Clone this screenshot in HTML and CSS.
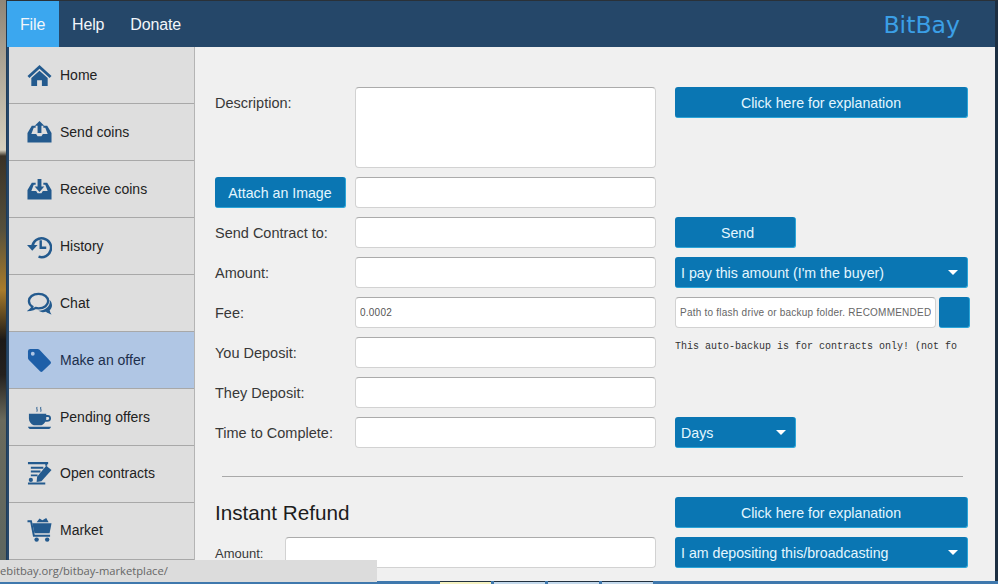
FILE: index.html
```html
<!DOCTYPE html>
<html lang="en">
<head>
    <meta charset="UTF-8">
    <title>BitBay</title>
    <link rel="stylesheet" href="styles.css">
</head>
<body>
    <div class="window">
        <div class="header">
            <div class="menu">
                <a class="menu-item active">File</a>
                <a class="menu-item">Help</a>
                <a class="menu-item">Donate</a>
            </div>
            <div class="brand">BitBay</div>
        </div>
        <div class="main">
            <div class="sidebar">
                <div class="side-item">
                    <svg class="side-icon" viewBox="0 0 26 26"><path d="M13 2 L0.5 13.5 L2.5 15.5 L13 6 L23.5 15.5 L25.5 13.5 Z"/><path d="M4.5 15.5 L13 8 L21.5 15.5 V24 H15.5 V18 H10.5 V24 H4.5 Z"/></svg>
                    <span>Home</span>
                </div>
                <div class="side-item">
                    <svg class="side-icon" viewBox="0 0 26 26"><path d="M5 6 H9 V8 H7 L4.500 14.500 H9.500 L11 17 H15 L16.500 14.500 H21.500 L19 8 H17 V6 H21 L25.500 13.500 V23.500 H0.500 V13.500 Z"/><path d="M13 1 L18 6 H15 V13.500 H11 V6 H8 Z"/></svg>
                    <span>Send coins</span>
                </div>
                <div class="side-item">
                    <svg class="side-icon" viewBox="0 0 26 26"><path d="M5 6 H9 V8 H7 L4.500 14.500 H9.500 L11 17 H15 L16.500 14.500 H21.500 L19 8 H17 V6 H21 L25.500 13.500 V23.500 H0.500 V13.500 Z"/><path d="M13 15.500 L8 10 H11 V2 H15 V10 H18 Z"/></svg>
                    <span>Receive coins</span>
                </div>
                <div class="side-item">
                    <svg class="side-icon" viewBox="0 0 26 26"><path d="M5.5 13 A9.8 9.8 0 1 1 12 23.5" fill="none" stroke="currentColor" stroke-width="2.6"/><path d="M0 11.5 H11 L5.5 17.5 Z"/><path d="M13 6.5 H15.5 V13 H20 V15.5 H13 Z"/></svg>
                    <span>History</span>
                </div>
                <div class="side-item">
                    <svg class="side-icon" viewBox="0 0 26 26"><path d="M12 3 C6 3 2 6.3 2 10.5 C2 13 3.4 15 5.6 16.3 C5.3 17.6 4.4 18.8 3.4 19.6 C5.6 19.4 7.6 18.6 9 17.6 C10 17.9 11 18 12 18 C18 18 22 14.700 22 10.500 C22 6.300 18 3 12 3 Z" fill="none" stroke="currentColor" stroke-width="2.4"/><path d="M23.500 9 C25 10.500 26 12.800 26 14.900 C26 17 25 18.800 23.600 20 C23.800 21.500 24.500 23 25.500 24.400 C23.400 24 21.300 23 19.700 21.700 C18.500 22 17.200 22.100 16 22 C14.300 21.800 12.800 21.300 11.500 20.400 C18 20.700 25 16.500 23.500 9 Z"/></svg>
                    <span>Chat</span>
                </div>
                <div class="side-item selected">
                    <svg class="side-icon" viewBox="0 0 26 26"><path fill-rule="evenodd" d="M3.500 1 H11 Q12.200 1 13 1.800 L24.500 14 Q25.500 15.200 24.500 16.300 L16 24.500 Q15 25.500 13.800 24.500 L2 12.500 Q1 11.500 1 10.500 V3.500 Q1 1 3.500 1 Z M6 4 A2 2 0 1 0 6 8 A2 2 0 1 0 6 4 Z"/></svg>
                    <span>Make an offer</span>
                </div>
                <div class="side-item">
                    <svg class="side-icon" viewBox="0 0 26 26"><path d="M2 9 H20 V10.500 H21.500 C24 10.500 25 12 25 14 C25 16 23.500 17.500 21 17.500 H19 C18 19.500 16.500 20.500 15 21 H7 C4 20 2 17 2 14 Z M20 12.500 V15.500 H21 C22.300 15.500 23 15 23 14 C23 13 22.300 12.500 21.500 12.500 Z"/><path d="M1 22.500 H25 C24.500 24 23.500 25 22 25 H4 C2.500 25 1.500 24 1 22.500 Z"/><path d="M10.500 2 C9.300 3.500 11.300 4.500 10.300 7 M14.500 2 C13.300 3.500 15.300 4.500 14.300 7" fill="none" stroke="currentColor" stroke-width="1"/></svg>
                    <span>Pending offers</span>
                </div>
                <div class="side-item raised">
                    <svg class="side-icon" viewBox="0 0 26 26"><path d="M1 2 H22 V4.500 H1 Z M4 7 H17 V9 H4 Z M4 11 H14 V13 H4 Z M4 15 H11 V17 H4 Z M1 23.500 H19 V25.500 H1 Z"/><path d="M4 18.500 A2.200 2.200 0 1 0 4 22.900 A2.200 2.200 0 1 0 4 18.500 Z"/><path d="M20 6 L25.500 10.500 L15 22 L10 23 L10.500 17.500 Z"/><path d="M19 4 H21 V6 H19 Z"/></svg>
                    <span>Open contracts</span>
                </div>
                <div class="side-item raised">
                    <svg class="side-icon" viewBox="0 0 26 26"><path d="M0.500 3.500 H5 L8 18.500 H24 V20.500 H6.300 L3.400 5.500 H0.500 Z"/><path d="M5.500 6.500 H25.500 L23.500 16.800 H7.800 Z"/><path d="M10 5.500 L13 1.500 L16 3.500 L20 1 L22.500 5.500 Z"/><circle cx="10" cy="23.500" r="2.300"/><circle cx="21" cy="23.500" r="2.300"/></svg>
                    <span>Market</span>
                </div>
            </div>
            <div class="content">
                <div class="form-grid">
                    <label class="field-label top">Description:</label>
                    <textarea class="text-input tall"></textarea>
                    <button class="btn wide top">Click here for explanation</button>

                    <button class="btn attach">Attach an Image</button>
                    <input class="text-input" type="text">
                    <div></div>

                    <label class="field-label">Send Contract to:</label>
                    <input class="text-input" type="text">
                    <button class="btn short send">Send</button>

                    <label class="field-label">Amount:</label>
                    <input class="text-input" type="text">
                    <div class="btn dropdown wide"><span>I pay this amount (I'm the buyer)</span><i class="caret"></i></div>

                    <label class="field-label">Fee:</label>
                    <input class="text-input small-text" type="text" value="0.0002">
                    <div class="path-row">
                        <input class="text-input small-text path-input" type="text" placeholder="Path to flash drive or backup folder. RECOMMENDED">
                        <button class="btn square"></button>
                    </div>

                    <label class="field-label">You Deposit:</label>
                    <input class="text-input" type="text">
                    <div class="backup-note">This auto-backup is for contracts only! (not fo</div>

                    <label class="field-label">They Deposit:</label>
                    <input class="text-input" type="text">
                    <div></div>

                    <label class="field-label">Time to Complete:</label>
                    <input class="text-input" type="text">
                    <div class="btn dropdown short"><span>Days</span><i class="caret"></i></div>
                </div>

                <hr class="divider">

                <div class="refund-head">
                    <h2 class="section-title">Instant Refund</h2>
                    <button class="btn wide">Click here for explanation</button>
                </div>
                <div class="refund-row">
                    <label class="field-label small-label">Amount:</label>
                    <input class="text-input" type="text">
                    <div class="btn dropdown wide"><span>I am depositing this/broadcasting</span><i class="caret"></i></div>
                </div>
            </div>
        </div>
    </div>
    <div class="taskbar">
        <div class="task-tab current"></div>
        <div class="task-tab"></div>
        <div class="task-tab"></div>
        <div class="task-tab"></div>
    </div>
    <div class="status-link">ebitbay.org/bitbay-marketplace/</div>
</body>
</html>
```

FILE: styles.css
```css
* {
    box-sizing: border-box;
}
body {
    margin: 0;
    height: 584px;
    overflow: hidden;
    display: flex;
    flex-direction: column;
    position: relative;
    font-family: "Liberation Sans", Arial, sans-serif;
    /* bit of desktop wallpaper showing left of the window */
    background: linear-gradient(#8f8577 0, #d6d0be 150px, #3a3226 156px, #55503c 230px, #a87c2c 290px, #1c1a18 340px, #24211e 375px, #6a6a5c 420px, #5c6660 581px);
}
.window {
    flex: 1;
    min-height: 0;
    margin-left: 6px;
    display: flex;
    flex-direction: column;
    border-top: 1px solid #2a3138;
    border-left: 1px solid #1f3b57;
    border-right: 3px solid #1d2f42;
    background-color: #254769;
    overflow: hidden;
}
.header {
    height: 46px;
    flex: none;
    display: flex;
    justify-content: space-between;
    align-items: stretch;
    background-color: #254769;
}
.menu {
    display: flex;
}
.menu-item {
    display: flex;
    align-items: center;
    padding: 2px 13px 0;
    color: #f2f6fa;
    font-size: 16px;
    letter-spacing: -0.15px;
}
.menu-item.active {
    background-color: #3ba7ef;
    width: 52px;
}
.brand {
    color: #3b9fe6;
    font-family: "DejaVu Sans", Verdana, sans-serif;
    font-size: 23.6px;
    line-height: 48px;
    padding-right: 35px;
}
.main {
    flex: 1;
    min-height: 0;
    display: flex;
    margin-left: 2px;
    background-color: #f0f0f0;
}
.sidebar {
    width: 186px;
    flex: none;
    background-color: #dedede;
    border-right: 1px solid #b4b4b4;
}
.side-item {
    height: 57px;
    display: flex;
    align-items: center;
    gap: 8px;
    padding-left: 18px;
    border-bottom: 1px solid #a8a8a8;
    font-size: 14px;
    color: #222;
}
.side-item.raised {
    padding-bottom: 3px;
}
.side-item.selected {
    background-color: #b0c6e4;
    color: #1c2f4c;
}
.side-icon {
    width: 25px;
    height: 25px;
    flex: none;
    fill: currentColor;
    color: #235a8e;
}
.selected .side-icon {
    color: #1e5fa8;
}
.content {
    flex: 1;
    min-width: 0;
    padding: 40px 0 0 20px;
    overflow: hidden;
}
.form-grid {
    display: grid;
    grid-template-columns: 140px 301px 293px;
    column-gap: 0;
    row-gap: 9px;
    align-items: center;
}
.form-grid > :nth-child(3n) {
    margin-left: 19px;
}
.field-label {
    color: #383838;
    font-size: 14.5px;
}
.field-label.top {
    align-self: start;
    line-height: 33px;
}
.small-label {
    font-size: 13px;
    padding-top: 2px;
}
.text-input {
    width: 100%;
    height: 31px;
    margin: 0;
    padding: 0 4px;
    background-color: #fff;
    border: 1px solid #d2d2d2;
    border-top-color: #ababab;
    border-radius: 4px;
    font-family: inherit;
    font-size: 14px;
    outline: none;
    resize: none;
    display: block;
}
.text-input.tall {
    height: 81px;
}
.small-text {
    font-size: 10px;
    letter-spacing: 0.23px;
    color: #555;
}
.small-text::placeholder {
    color: #666;
    opacity: 1;
}
.btn {
    display: flex;
    align-items: center;
    justify-content: center;
    height: 31px;
    padding: 2px 6px 0;
    border: none;
    border-radius: 3px;
    border-right: 1px solid #2aa5d8;
    border-bottom: 1px solid #2aa5d8;
    background-color: #0a76b3;
    color: #e4f6ff;
    font-family: inherit;
    font-size: 14.2px;
}
.btn.top {
    align-self: start;
}
.btn.wide {
    width: 293px;
}
.btn.short {
    width: 121px;
}
.btn.send {
    padding-left: 11px;
}
.btn.attach {
    width: 131px;
}
.dropdown {
    justify-content: space-between;
}
.caret {
    width: 0;
    height: 0;
    margin: 0 3px 2px 0;
    border-left: 5px solid transparent;
    border-right: 5px solid transparent;
    border-top: 5px solid #fff;
}
.path-row {
    display: flex;
    gap: 3px;
    width: 295px;
}
.path-input {
    width: 261px;
    flex: none;
}
.btn.square {
    width: 31px;
    flex: none;
}
.backup-note {
    width: 282px;
    overflow: hidden;
    white-space: nowrap;
    font-family: "Liberation Mono", monospace;
    font-size: 10px;
    color: #333;
    align-self: start;
    padding-top: 4px;
}
.divider {
    width: 741px;
    height: 1px;
    margin: 28px 0 20px 7px;
    border: none;
    background-color: #a9a9a9;
}
.refund-head {
    display: flex;
    align-items: center;
    gap: 325px;
    margin-bottom: 9px;
}
.section-title {
    width: 135px;
    margin: 0;
    font-size: 20.7px;
    font-weight: normal;
    white-space: nowrap;
    color: #1c1c1c;
}
.refund-row {
    display: grid;
    grid-template-columns: 70px 371px 293px;
    align-items: center;
}
.refund-row .dropdown {
    margin-left: 19px;
}
.taskbar {
    flex: none;
    height: 3px;
    display: flex;
    gap: 3px;
    padding-left: 440px;
    background-color: #3f78ad;
}
.task-tab {
    width: 51px;
    height: 3px;
    background-color: #c4d9ec;
    border-top: 1px solid #20303f;
}
.task-tab.current {
    background-color: #f4f1c0;
}
.status-link {
    position: absolute;
    left: 0;
    bottom: 2px;
    width: 377px;
    height: 22px;
    overflow: hidden;
    background-color: #dcdcdc;
    font-family: "Open Sans", sans-serif;
    font-size: 11.2px;
    line-height: 22px;
    color: #666;
    white-space: nowrap;
}
```
